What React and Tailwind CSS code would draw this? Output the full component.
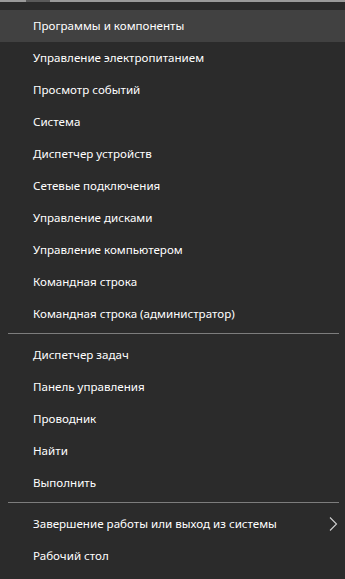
import React from 'react';

const groups = [
  [
    'Программы и компоненты',
    'Управление электропитанием',
    'Просмотр событий',
    'Система',
    'Диспетчер устройств',
    'Сетевые подключения',
    'Управление дисками',
    'Управление компьютером',
    'Командная строка',
    'Командная строка (администратор)',
  ],
  ['Диспетчер задач', 'Панель управления', 'Проводник', 'Найти', 'Выполнить'],
  ['Завершение работы или выход из системы', 'Рабочий стол'],
];

const MenuItem = ({ label, active, submenu }) => (
  <div
    className={
      'flex h-[32px] items-center pl-[33px] pr-[7px] text-[11.6px] text-white ' +
      (active ? 'bg-[#414141]' : '')
    }
  >
    <span className="flex-1 whitespace-nowrap">{label}</span>
    {submenu && (
      <svg width="9" height="16" viewBox="0 0 9 16" className="text-[#d0d0d0]">
        <path d="M1 1.5 L7.5 8 L1 14.5" fill="none" stroke="currentColor" strokeWidth="1.1" />
      </svg>
    )}
  </div>
);

export default function App() {
  return (
    <div
      className="h-[579px] w-[345px] overflow-hidden bg-[#2b2b2b]"
      style={{ fontFamily: '"Noto Sans", "Open Sans", sans-serif' }}
    >
      <div className="flex h-[2px]">
        <div className="w-[26px] bg-[#9a9a9a]" />
        <div className="w-[24px] bg-[#5a5a5a]" />
        <div className="flex-1 bg-[#9a9a9a]" />
      </div>
      <div className="pt-[8px]">
        {groups.map((items, gi) => (
          <div key={gi}>
            {gi > 0 && (
              <div className="pt-[3px] pb-[5px] pl-[8px] pr-[6px]">
                <div className="h-[1px] bg-[#7d7d7d]" />
              </div>
            )}
            {items.map((label, i) => (
              <MenuItem
                key={label}
                label={label}
                active={gi === 0 && i === 0}
                submenu={gi === 2 && i === 0}
              />
            ))}
          </div>
        ))}
      </div>
    </div>
  );
}
